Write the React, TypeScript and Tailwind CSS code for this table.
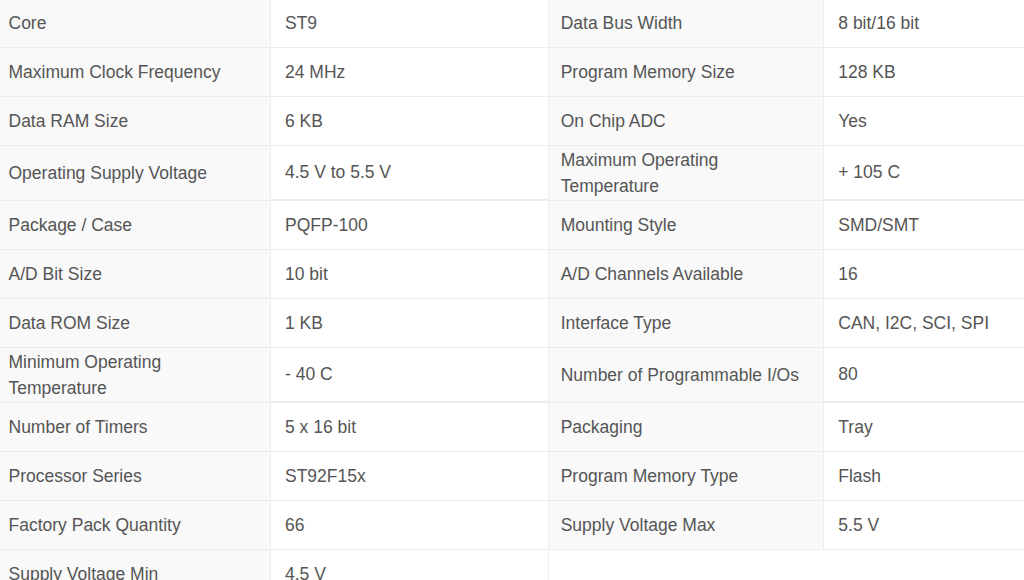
const rows: [string, string, string, string][] = [
  ["Core", "ST9", "Data Bus Width", "8 bit/16 bit"],
  ["Maximum Clock Frequency", "24 MHz", "Program Memory Size", "128 KB"],
  ["Data RAM Size", "6 KB", "On Chip ADC", "Yes"],
  ["Operating Supply Voltage", "4.5 V to 5.5 V", "Maximum Operating Temperature", "+ 105 C"],
  ["Package / Case", "PQFP-100", "Mounting Style", "SMD/SMT"],
  ["A/D Bit Size", "10 bit", "A/D Channels Available", "16"],
  ["Data ROM Size", "1 KB", "Interface Type", "CAN, I2C, SCI, SPI"],
  ["Minimum Operating Temperature", "- 40 C", "Number of Programmable I/Os", "80"],
  ["Number of Timers", "5 x 16 bit", "Packaging", "Tray"],
  ["Processor Series", "ST92F15x", "Program Memory Type", "Flash"],
  ["Factory Pack Quantity", "66", "Supply Voltage Max", "5.5 V"],
  ["Supply Voltage Min", "4.5 V", "", ""],
];

// rows whose label wraps onto two lines get a heavier line under the values
const tallRows = [3, 7];

function Label({ text }: { text: string }) {
  return (
    <div className="flex items-center min-h-[48.9px] px-3 py-[1.2px] bg-[#f9f9f9] border-b border-r border-[#ececec]">
      {text}
    </div>
  );
}

function Value({ text, tall }: { text: string; tall: boolean }) {
  return (
    <div
      className={`flex items-center min-h-[48.9px] pl-[14px] pr-3 py-[1.2px] bg-white border-r border-[#ececec] ${
        tall ? "border-b-2" : "border-b"
      }`}
    >
      {text}
    </div>
  );
}

export default function App() {
  return (
    <div className="w-[1024px] h-[580px] overflow-hidden bg-white">
      <div
        className="grid grid-cols-[274.5px_277.7px_275.6px_274px] w-[1102px] -ml-[3.5px] -mt-[1px] text-[17.5px] leading-[26px] text-[#555]"
        style={{ fontFamily: '"Liberation Sans", Arial, sans-serif' }}
      >
        {rows.map((r, i) => {
          const tall = tallRows.includes(i);
          const last = r[2] === "";
          return (
            <div key={i} className="contents">
              <Label text={r[0]} />
              <Value text={r[1]} tall={tall} />
              {last ? (
                <>
                  <div />
                  <div />
                </>
              ) : (
                <>
                  <Label text={r[2]} />
                  <Value text={r[3]} tall={tall} />
                </>
              )}
            </div>
          );
        })}
      </div>
    </div>
  );
}
